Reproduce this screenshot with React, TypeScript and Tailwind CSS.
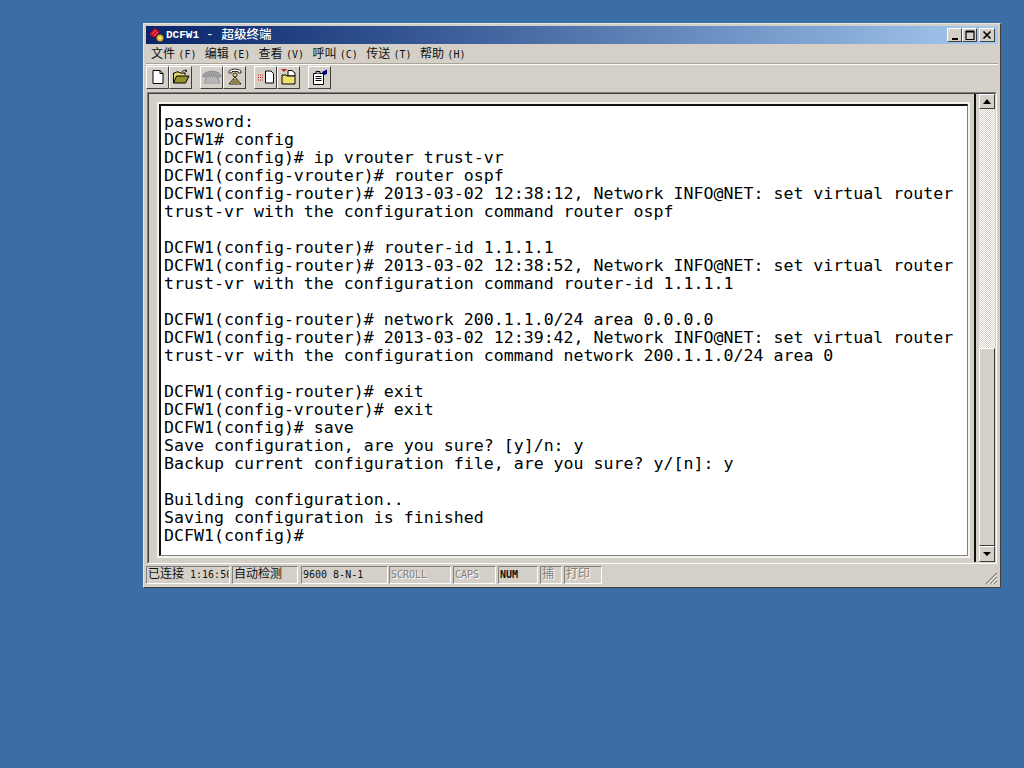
import React from 'react';

const raised = "border border-t-white border-l-white border-r-[#404040] border-b-[#404040] bg-[#d4d0c8]";
const cjk = "font-['Liberation_Sans','Noto_Sans_CJK_SC',sans-serif]";
const small = "font-['DejaVu_Sans_Mono','Noto_Sans_CJK_SC',monospace] text-[10px]";

const terminalText = `password:
DCFW1# config
DCFW1(config)# ip vrouter trust-vr
DCFW1(config-vrouter)# router ospf
DCFW1(config-router)# 2013-03-02 12:38:12, Network INFO@NET: set virtual router
trust-vr with the configuration command router ospf

DCFW1(config-router)# router-id 1.1.1.1
DCFW1(config-router)# 2013-03-02 12:38:52, Network INFO@NET: set virtual router
trust-vr with the configuration command router-id 1.1.1.1

DCFW1(config-router)# network 200.1.1.0/24 area 0.0.0.0
DCFW1(config-router)# 2013-03-02 12:39:42, Network INFO@NET: set virtual router
trust-vr with the configuration command network 200.1.1.0/24 area 0

DCFW1(config-router)# exit
DCFW1(config-vrouter)# exit
DCFW1(config)# save
Save configuration, are you sure? [y]/n: y
Backup current configuration file, are you sure? y/[n]: y

Building configuration..
Saving configuration is finished
DCFW1(config)#`;

const menus = ["文件", "编辑", "查看", "呼叫", "传送", "帮助"];
const menuKeys = ["F", "E", "V", "C", "T", "H"];

const AppIcon = () => (
  <svg width="18" height="16" viewBox="0 0 18 16">
    <path d="M1 7 L7 1 L12 5 L6 11 Z" fill="#c8102e" stroke="#7a0010" strokeWidth="0.6" />
    <path d="M4 7 L8 3 M6 9 L10 5" stroke="#f08080" strokeWidth="0.8" />
    <circle cx="12" cy="11" r="3.5" fill="#e8c040" stroke="#705000" strokeWidth="0.6" />
    <circle cx="12" cy="11" r="1.2" fill="#fff0a0" />
  </svg>
);

const ToolIcon = ({ kind }: { kind: string }) => {
  if (kind === "new") return (
    <svg width="16" height="16" viewBox="0 0 16 16">
      <path d="M3 1.500H10L13 4.500V14.500H3Z" fill="#fff" stroke="#000" />
      <path d="M10 1.500V4.500H13" fill="none" stroke="#000" />
    </svg>
  );
  if (kind === "open") return (
    <svg width="18" height="16" viewBox="0 0 18 16">
      <path d="M1.500 14V4H3L4 3H7L8 4H13V6" fill="#e8d870" stroke="#000" />
      <path d="M1.500 14L4.500 7H17L13.500 14Z" fill="#98902a" stroke="#000" />
      <path d="M10 3C11 1 13 1 15 2M15 2L13.500 0.500M15 2L13 3" fill="none" stroke="#000" strokeWidth="0.8" />
    </svg>
  );
  if (kind === "phoneOff") return (
    <svg width="20" height="16" viewBox="0 0 20 16">
      <path d="M1 6C5 1 15 1 19 6L19 8L15 8L14 6H6L5 8L1 8Z" fill="#a0a0a0" stroke="#909090" />
      <path d="M5 7H15L18 14H2Z" fill="#a8a8a8" stroke="#909090" />
      <path d="M5 9H15M4 11H16M3.500 13H16.500" stroke="#e0e0e0" strokeDasharray="1 1" />
    </svg>
  );
  if (kind === "phone") return (
    <svg width="18" height="18" viewBox="0 0 18 18">
      <path d="M3 3C6 0.500 12 0.500 15 3V5H12V3.500H6V5H3Z" fill="#fff" stroke="#000" strokeWidth="0.8" />
      <circle cx="9" cy="7" r="2" fill="#e8d870" stroke="#000" strokeWidth="0.8" />
      <path d="M9 9L3 16H15Z" fill="#e8d870" stroke="#000" strokeWidth="0.8" />
      <path d="M7 12H11M5.500 14H12.500" stroke="#000" strokeWidth="0.8" />
    </svg>
  );
  if (kind === "send") return (
    <svg width="20" height="16" viewBox="0 0 20 16">
      <path d="M9.500 2H15L17.500 4.500V14H9.500Z" fill="#fff" stroke="#000" />
      <path d="M2 6H8M2 8.500H8M2 11H8" stroke="#c02020" strokeDasharray="1 1" />
    </svg>
  );
  if (kind === "receive") return (
    <svg width="18" height="18" viewBox="0 0 18 18">
      <path d="M1 1H7L4 4Z" fill="#c02020" />
      <path d="M8 2.500H12L15 5V8H8Z" fill="#fff" stroke="#000" />
      <path d="M2 16V7H6L7 8H15V16Z" fill="#f0e070" stroke="#000" />
    </svg>
  );
  return (
    <svg width="18" height="18" viewBox="0 0 18 18">
      <path d="M2.500 5.500H12.500V16.500H2.500Z" fill="#fff" stroke="#000" />
      <path d="M4.500 8.500H10.500M4.500 10.500H10.500M4.500 12.500H10.500" stroke="#000" />
      <path d="M5 5.500V3.500H9V5.500" fill="#c0c0c0" stroke="#000" />
      <path d="M11 4L16 1.500V6L13 7Z" fill="#000080" />
    </svg>
  );
};

const ToolButton = ({ kind }: { kind: string }) => (
  <div className={`${raised} w-[23px] h-[23px] flex items-center justify-center`}>
    <ToolIcon kind={kind} />
  </div>
);

const CaptionButton = ({ children, className }: { children: React.ReactNode; className: string }) => (
  <div className={`${raised} h-[14px] flex items-center justify-center ${className}`}>
    <svg width="10" height="10" viewBox="0 0 10 10">{children}</svg>
  </div>
);

const Pane = ({ width, disabled, className = "", children }: { width: string; disabled?: boolean; className?: string; children: React.ReactNode }) => (
  <div className={`${width} h-[18px] shrink-0 overflow-hidden whitespace-pre border border-t-[#808080] border-l-[#808080] border-r-white border-b-white pl-[1px] leading-[15px] ${disabled ? "text-[#808080] [text-shadow:1px_1px_0_#fff]" : "text-[#101010]"} ${className}`}>
    {children}
  </div>
);

export default function App() {
  return (
    <div className="w-[1024px] h-[768px] overflow-hidden bg-[#3a6ea5] pt-[23px] pl-[143px]">
      <div className={`w-[858px] h-[565px] flex flex-col bg-[#d4d0c8] border border-t-[#e8e8e4] border-l-[#e8e8e4] border-r-[#404040] border-b-[#404040] p-[2px] ${cjk}`}>
        {/* title bar */}
        <div className="h-[18px] shrink-0 flex items-center bg-gradient-to-r from-[#0a246a] to-[#a6caf0] pl-[2px] pr-[3px]">
          <AppIcon />
          <span className="text-white text-[11px] font-bold leading-none whitespace-pre font-['Liberation_Mono',monospace]">DCFW1</span>
          <span className="ml-[7px] text-white text-[12.5px] leading-none whitespace-pre font-['Liberation_Mono','Noto_Sans_CJK_SC',monospace]">-</span>
          <span className="ml-[8px] text-white text-[12.5px] font-medium leading-none whitespace-pre">超级终端</span>
          <div className="ml-auto flex">
            <CaptionButton className="w-[15px]"><rect x="2" y="8" width="6" height="2" fill="#000" /></CaptionButton>
            <CaptionButton className="w-[15px] mr-[2px]"><path d="M1 1.500H9M1 1V9.500H9V1" fill="none" stroke="#000" strokeWidth="1.2" /><rect x="1" y="0.500" width="8" height="2" fill="#000" /></CaptionButton>
            <CaptionButton className="w-[16px]"><path d="M1.500 1.500L8.500 8.500M8.500 1.500L1.500 8.500" stroke="#000" strokeWidth="1.600" /></CaptionButton>
          </div>
        </div>
        {/* menu */}
        <div className="h-[20px] shrink-0 flex items-center pl-[5px] border-b border-[#a8a49c] text-[12px] text-[#101010]">
          {menus.map((m, i) => (
            <span key={m} className="w-[53.8px] whitespace-pre">{m} <span className={small}>({menuKeys[i]})</span></span>
          ))}
        </div>
        {/* toolbar */}
        <div className="h-[28px] shrink-0 flex items-center border-t border-white pb-[3px]">
          <ToolButton kind="new" />
          <ToolButton kind="open" />
          <div className="w-[8px]" />
          <ToolButton kind="phoneOff" />
          <ToolButton kind="phone" />
          <div className="w-[8px]" />
          <ToolButton kind="send" />
          <ToolButton kind="receive" />
          <div className="w-[8px]" />
          <ToolButton kind="props" />
        </div>
        {/* client area */}
        <div className="h-[472px] shrink-0 flex ml-[1px] mr-[1px] border border-t-[#808080] border-l-[#808080] border-r-white border-b-white">
          <div className="flex-1 min-w-0 flex border border-t-[#404040] border-l-[#404040] border-r-[#d4d0c8] border-b-[#d4d0c8]">
            <div className="flex-1 min-w-0 pt-[10px] pl-[10px] pb-[6px] pr-[6px] flex">
              <div className="flex-1 min-w-0 border-t-2 border-l-2 border-r border-b border-t-[#101010] border-l-[#101010] border-r-[#808080] border-b-[#808080] bg-white outline outline-2 outline-[#f4f3f0]">
                <pre className="pl-[3px] pt-[7px] font-['DejaVu_Sans_Mono',monospace] text-[16.6px] leading-[18px] text-black">{terminalText}</pre>
              </div>
            </div>
            <div className="w-[2px] bg-[#101010]" />
            {/* scrollbar */}
            <div className="w-[16px] flex flex-col ml-[3px]">
              <div className={`${raised} h-[15px] shrink-0 flex items-center justify-center`}>
                <svg width="8" height="5" viewBox="0 0 8 5"><path d="M4 0L8 5H0Z" fill="#000" /></svg>
              </div>
              <div className="h-[239px] shrink-0 bg-[repeating-conic-gradient(#d4d0c8_0_25%,#ffffff_0_50%)] bg-[length:2px_2px]" />
              <div className={`${raised} flex-1`} />
              <div className={`${raised} h-[16px] shrink-0 flex items-center justify-center`}>
                <svg width="8" height="4" viewBox="0 0 8 4"><path d="M0 0H8L4 4Z" fill="#000" /></svg>
              </div>
            </div>
          </div>
        </div>
        {/* status bar */}
        <div className="relative flex-1 flex items-center pt-[1px] gap-[2px]">
          <Pane width="w-[84px]" className="text-[12px]">已连接<span className={small}> 1:16:50</span></Pane>
          <Pane width="w-[66px]" className="mr-[1px] text-[12px]">自动检测</Pane>
          <Pane width="w-[87px]" className={`mr-[-1px] ${small}`}>9600 8-N-1</Pane>
          <Pane width="w-[62px]" disabled className={small}>SCROLL</Pane>
          <Pane width="w-[43px]" disabled className={small}>CAPS</Pane>
          <Pane width="w-[40px]" className={`font-bold border-t-[#404040] border-l-[#404040] ${small}`}>NUM</Pane>
          <Pane width="w-[22px]" disabled className="text-[12px]">捕</Pane>
          <Pane width="w-[38px]" disabled className="text-[12px]">打印</Pane>
          <svg className="absolute right-0 bottom-0" width="14" height="14" viewBox="0 0 14 14">
            <path d="M13 2L2 13M13 6L6 13M13 10L10 13" stroke="#808080" strokeWidth="1.200" />
            <path d="M13 3.500L3.500 13M13 7.500L7.500 13M13 11.500L11.500 13" stroke="#fff" />
          </svg>
        </div>
      </div>
    </div>
  );
}
